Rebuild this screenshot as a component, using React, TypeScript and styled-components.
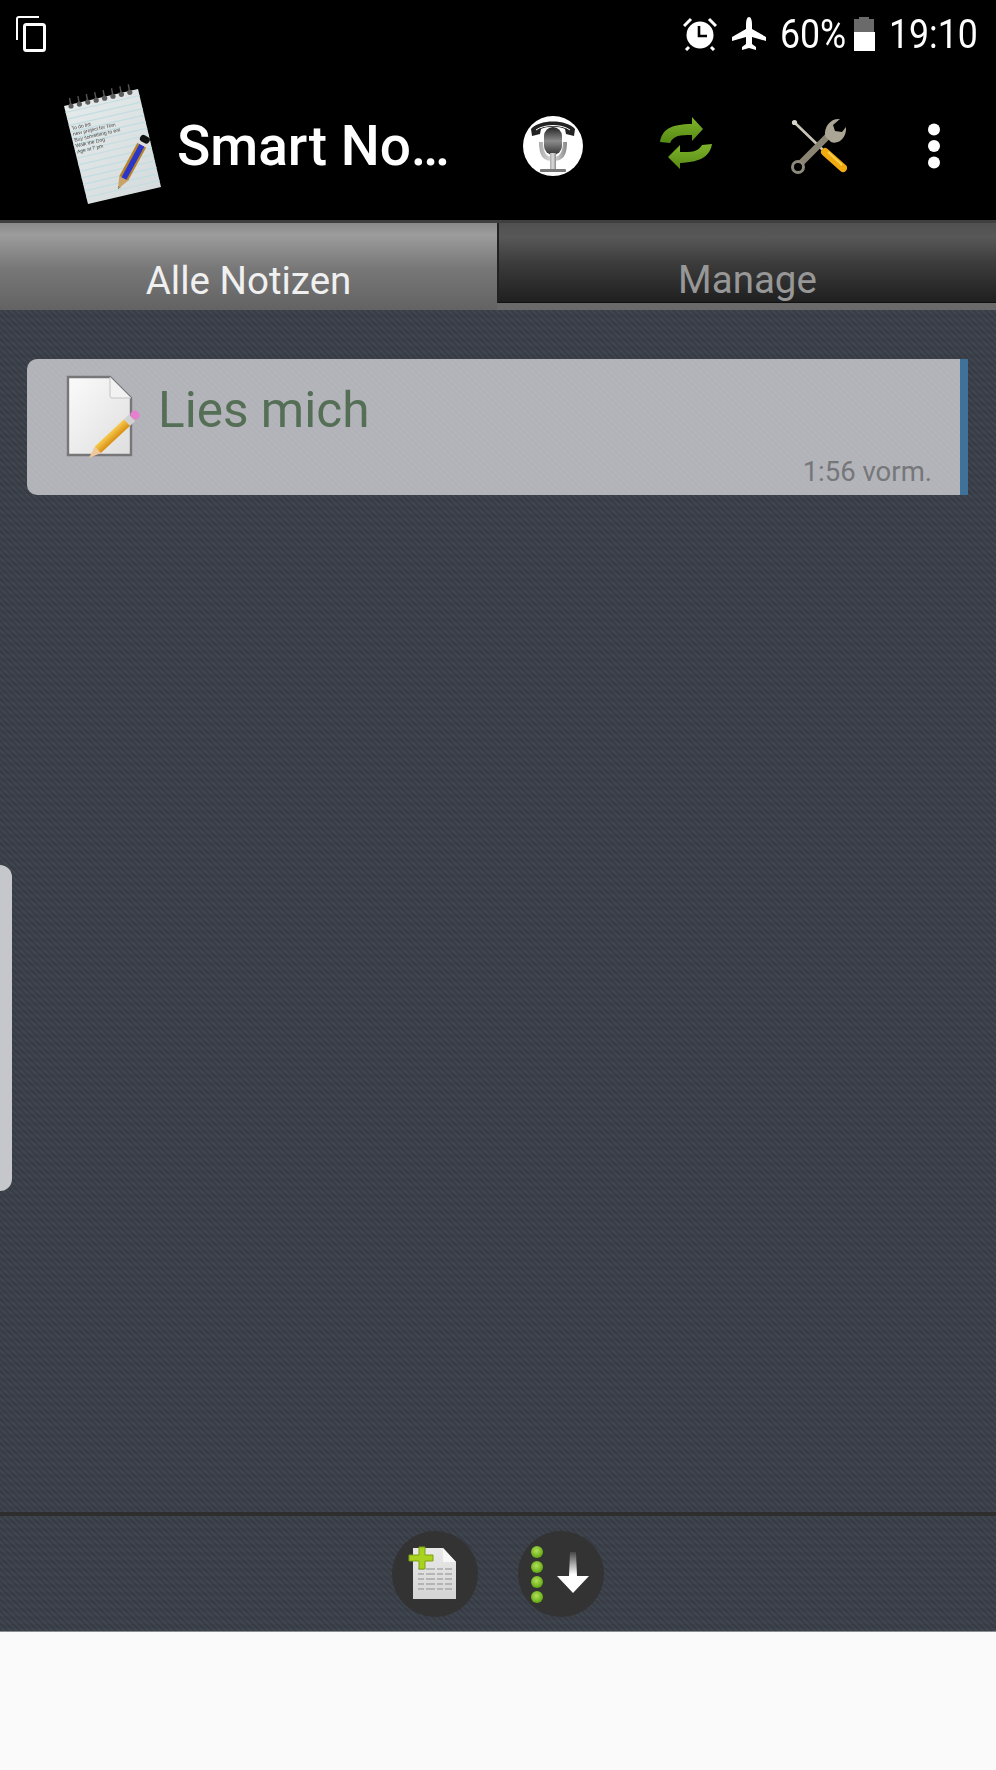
import React from "react";
import styled, { createGlobalStyle, css } from "styled-components";

const Global = createGlobalStyle`
  html, body { margin: 0; padding: 0; background: #fafafa; }
  * { box-sizing: border-box; }
`;

const weave = css`
  background-color: #40464f;
  background-image:
    linear-gradient(45deg, rgba(0,0,0,.11) 25%, transparent 25%, transparent 50%, rgba(0,0,0,.11) 50%, rgba(0,0,0,.11) 75%, transparent 75%),
    linear-gradient(0deg, rgba(0,0,10,.05) 50%, transparent 50%);
  background-size: 6px 6px, 8px 8px;
`;

const Page = styled.div`
  width: 996px;
  height: 1770px;
  background: #fafafa;
  display: flex;
  flex-direction: column;
  font-family: Roboto, "Liberation Sans", sans-serif;
  overflow: hidden;
`;

const StatusBar = styled.div`
  height: 72px;
  background: #000;
  display: flex;
  align-items: center;
  justify-content: space-between;
  padding: 0 20px 4px 15px;
  color: #fff;
`;
const StatusRight = styled.div`
  display: flex;
  align-items: center;
`;
const StatusText = styled.span<{ $w: number; $ml: number; $sx: number }>`
  display: block;
  width: ${(p) => p.$w}px;
  margin-left: ${(p) => p.$ml}px;
  font-size: 41px;
  line-height: 46px;
  white-space: nowrap;
  transform: scaleX(${(p) => p.$sx});
  transform-origin: left center;
`;
const StatusIcon = styled.svg<{ $ml?: number }>`
  display: block;
  margin-left: ${(p) => p.$ml ?? 0}px;
  flex: none;
`;

const ActionBar = styled.div`
  height: 148px;
  background: #000;
  display: flex;
  align-items: center;
  padding-right: 11px;
`;
const Logo = styled.svg`
  display: block;
  flex: none;
  margin-left: 62px;
  filter: blur(0.4px);
`;
const Title = styled.div`
  flex: 1;
  margin-left: 15px;
  color: #fff;
  font-size: 55px;
  font-weight: 500;
  line-height: 64px;
  white-space: nowrap;
`;
const ActionButton = styled.div<{ $w: number }>`
  width: ${(p) => p.$w}px;
  height: 148px;
  display: flex;
  align-items: center;
  justify-content: center;
  flex: none;
  svg { display: block; filter: blur(0.5px); }
`;

const Tabs = styled.div`
  height: 90px;
  display: flex;
  border-top: 3px solid #3f3f3f;
  background: #6a6a6a;
`;
const Tab = styled.div<{ $active?: boolean }>`
  width: ${(p) => (p.$active ? 497 : 499)}px;
  height: ${(p) => (p.$active ? 87 : 80)}px;
  display: flex;
  align-items: flex-end;
  justify-content: center;
  font-size: 38.5px;
  line-height: 44px;
  padding-bottom: ${(p) => (p.$active ? 7 : 0)}px;
  color: ${(p) => (p.$active ? "#f0f0f0" : "#979797")};
  background: ${(p) =>
    p.$active
      ? "linear-gradient(#8a8a8a 0, #9c9c9c 12px, #787878 45px, #636363 100%)"
      : "linear-gradient(#505050 0, #585858 14px, #3c3c3c 40px, #1f1f1f 100%)"};
  ${(p) => !p.$active && "border-left: 2px solid #222; border-bottom: 1px solid #111;"}
`;

const Main = styled.div`
  ${weave}
  position: relative;
  height: 1202px;
  padding: 49px 28px 0 27px;
`;
const Handle = styled.div`
  position: absolute;
  left: 0;
  top: 555px;
  width: 12px;
  height: 326px;
  background: #c6c7ca;
  border-radius: 0 13px 13px 0;
`;
const Card = styled.div`
  height: 136px;
  display: flex;
  border-radius: 10px 0 0 10px;
  overflow: hidden;
  background-color: #b2b3b8;
  background-image: linear-gradient(45deg, rgba(255,255,255,.03) 25%, transparent 25%, transparent 50%, rgba(255,255,255,.03) 50%, rgba(255,255,255,.03) 75%, transparent 75%);
  background-size: 6px 6px;
  border-right: 8px solid #3f7199;
`;
const NoteIcon = styled.svg`
  display: block;
  flex: none;
  margin: 16px 0 0 39px;
  filter: blur(0.5px);
`;
const CardBody = styled.div`
  flex: 1;
  display: flex;
  flex-direction: column;
  padding: 22px 28px 7px 8px;
`;
const NoteTitle = styled.div`
  font-size: 49.5px;
  line-height: 58px;
  color: #556f57;
`;
const NoteTime = styled.div`
  margin-top: auto;
  text-align: right;
  font-size: 27.5px;
  line-height: 32px;
  color: #76777a;
`;

const BottomBar = styled.div`
  ${weave}
  height: 120px;
  border-top: 4px solid #2e2e2e;
  border-bottom: 1px solid #8a8c90;
  display: flex;
  align-items: flex-start;
  justify-content: center;
  gap: 40px;
  padding: 15px 1px 0 0;
`;
const RoundButton = styled.div`
  width: 86px;
  height: 86px;
  border-radius: 50%;
  background: #333333;
  flex: none;
  svg { display: block; filter: blur(0.5px); }
`;

const NotepadIcon = () => (
  <Logo width="100" height="124" viewBox="0 0 100 124">
    <defs>
      <linearGradient id="pad" x1="0" y1="0" x2="1" y2="1">
        <stop offset="0" stopColor="#e6ebec" />
        <stop offset="1" stopColor="#d4dadb" />
      </linearGradient>
    </defs>
    <polygon points="2,22 76,5 99,103 26,120" fill="url(#pad)" />
    {Array.from({ length: 14 }).map((_, i) => {
      const t = (i + 1) / 15;
      return (
        <line
          key={i}
          x1={2 + 24 * t}
          y1={22 + 98 * t}
          x2={76 + 23 * t}
          y2={5 + 98 * t}
          stroke="#c2dde0"
          strokeWidth="1.2"
        />
      );
    })}
    {Array.from({ length: 8 }).map((_, i) => {
      const x = 9 + i * 8.4;
      const y = 22 - i * 1.95;
      return (
        <g key={i}>
          <line x1={x} y1={y} x2={x - 1.5} y2={y - 8} stroke="#555" strokeWidth="1.4" />
          <circle cx={x} cy={y} r="2.6" fill="#5c5c5c" />
        </g>
      );
    })}
    <g transform="rotate(-13 10 46)" fill="#444" fontFamily="Liberation Sans, sans-serif" fontSize="5">
      <text x="10" y="46">To do list</text>
      <text x="10" y="52">new project for Tom</text>
      <text x="10" y="58">Buy something to eat</text>
      <text x="10" y="64">Walk the Dog</text>
      <text x="10" y="70">Age at 7 pm</text>
    </g>
    <g transform="translate(56 105) rotate(28.4)">
      <polygon points="-1.5,-3 0,0 1.5,-3" fill="#111" />
      <polygon points="-5,-12 0,0 5,-12" fill="#c9a36a" />
      <rect x="-5" y="-50" width="10" height="38" fill="#b9832a" />
      <rect x="-2.5" y="-50" width="5.5" height="38" fill="#2a36c8" />
      <rect x="-5" y="-54" width="10" height="4" fill="#ddd" />
      <rect x="-5" y="-60" width="10" height="7" rx="3" fill="#111" />
    </g>
  </Logo>
);

const MicIcon = () => (
  <svg width="62" height="62" viewBox="0 0 62 62">
    <defs>
      <linearGradient id="mh" x1="0" y1="0" x2="0" y2="1">
        <stop offset="0" stopColor="#222" />
        <stop offset=".5" stopColor="#8c8c8c" />
        <stop offset="1" stopColor="#333" />
      </linearGradient>
      <linearGradient id="mb" x1="0" y1="0" x2="1" y2="0">
        <stop offset="0" stopColor="#aaa" />
        <stop offset=".5" stopColor="#ddd" />
        <stop offset="1" stopColor="#888" />
      </linearGradient>
    </defs>
    <circle cx="31" cy="31" r="30" fill="#fff" />
    <path d="M9 14C17 4 45 4 53 14L52 21 44 19 43 14C37 11 25 11 19 14L18 19 10 21Z" fill="#222" />
    <path d="M14 15C22 9 40 9 48 15" stroke="#fff" strokeWidth="1" fill="none" />
    <rect x="22" y="12" width="18" height="28" rx="9" fill="url(#mh)" />
    <path d="M17 27C17 42 22 46 31 46S45 42 45 27L41 27C41 38 37 42 31 42S21 38 21 27Z" fill="url(#mb)" />
    <rect x="28" y="38" width="6" height="16" fill="url(#mb)" />
    <rect x="18" y="54" width="26" height="3" rx="1" fill="#777" />
  </svg>
);

const SyncIcon = () => (
  <svg width="60" height="58" viewBox="0 0 60 58">
    <defs>
      <linearGradient id="sg" x1="0" y1="0" x2="0" y2="1">
        <stop offset="0" stopColor="#7fb32a" />
        <stop offset="1" stopColor="#558a14" />
      </linearGradient>
    </defs>
    <g fill="url(#sg)" strokeLinejoin="round">
      <path d="M5 25C7 13 15 7 37 7L37 0 48 12 37 24 37 18C25 18 19 18 15 26Z" />
      <path d="M57 27C55 38 48 45 25 46L25 52 13 40 25 28 25 35C37 35 43 35 47 28Z" />
    </g>
  </svg>
);

const ToolsIcon = () => (
  <svg width="60" height="60" viewBox="0 0 60 60">
    <line x1="8" y1="7" x2="35" y2="33" stroke="#c9c6b8" strokeWidth="2.6" strokeLinecap="round" />
    <circle cx="7.5" cy="6.5" r="2.6" fill="#d8d6ca" />
    <path d="M14 47L41 20" stroke="#8a8572" strokeWidth="6.5" strokeLinecap="butt" />
    <circle cx="11" cy="51" r="5.5" fill="#000" stroke="#8d8a7c" strokeWidth="3" />
    <path d="M38 20C37 10 44 2 53 3L46 9 48 15 55 16 59 11C60 21 52 29 44 26Z" fill="#aaa594" />
    <line x1="38" y1="36" x2="56" y2="52" stroke="#eeaa10" strokeWidth="8" strokeLinecap="round" />
    <line x1="41" y1="36" x2="55" y2="49" stroke="#fbd24a" strokeWidth="1.8" />
  </svg>
);

const MoreIcon = () => (
  <svg width="14" height="46" viewBox="0 0 14 46">
    <circle cx="7" cy="6.5" r="6" fill="#fff" />
    <circle cx="7" cy="23" r="6" fill="#fff" />
    <circle cx="7" cy="39.5" r="6" fill="#fff" />
  </svg>
);

const NoteEditIcon = () => (
  <NoteIcon width="84" height="92" viewBox="0 0 84 92">
    <defs>
      <linearGradient id="nd" x1="0" y1="0" x2="1" y2="1">
        <stop offset="0" stopColor="#fbfbfb" />
        <stop offset="1" stopColor="#dedede" />
      </linearGradient>
      <linearGradient id="pc" x1="0" y1="0" x2="1" y2="0">
        <stop offset="0" stopColor="#f6cc52" />
        <stop offset="1" stopColor="#d98e10" />
      </linearGradient>
    </defs>
    <path d="M2 2H44L65 23V80H2Z" fill="url(#nd)" stroke="#77777a" strokeWidth="2.4" />
    <path d="M44 2V21Q44 23 46 23H65Z" fill="#f2f2f2" stroke="#c4c4c4" strokeWidth="1" />
    <g transform="translate(23 83) rotate(47)">
      <polygon points="-4.5,-12 0,0 4.5,-12" fill="#f0c89a" />
      <rect x="-4.5" y="-52" width="9" height="40" fill="url(#pc)" />
      <rect x="-4.5" y="-59" width="9" height="7" fill="#d2d2d2" />
      <rect x="-4.5" y="-67" width="9" height="8" rx="3.5" fill="#e77fd0" />
    </g>
  </NoteIcon>
);

const AddNoteIcon = () => (
  <svg width="86" height="86" viewBox="0 0 86 86">
    <defs>
      <linearGradient id="ad" x1="0" y1="0" x2="0" y2="1">
        <stop offset="0" stopColor="#e9e9e9" />
        <stop offset="1" stopColor="#d4d4d4" />
      </linearGradient>
    </defs>
    <path d="M21 17H51L64 31V68H21Z" fill="url(#ad)" />
    <path d="M51 17V31H64Z" fill="#f7f7f7" />
    {[38, 43, 48, 53, 58].map((y) => (
      <line key={y} x1="26" y1={y} x2="60" y2={y} stroke="#a8a8a8" strokeWidth="1.4" strokeDasharray="6 2 9 2" />
    ))}
    <path d="M27 16H33V24H41V30H33V38H27V30H17V24H27Z" fill="#a9d21f" stroke="#7da012" strokeWidth="1" />
  </svg>
);

const ImportIcon = () => (
  <svg width="86" height="86" viewBox="0 0 86 86">
    <defs>
      <radialGradient id="gd" cx=".45" cy=".4" r=".6">
        <stop offset="0" stopColor="#b4e05a" />
        <stop offset="1" stopColor="#5fa80f" />
      </radialGradient>
      <linearGradient id="ar" x1="0" y1="0" x2="0" y2="1">
        <stop offset="0" stopColor="#ffffff" stopOpacity=".1" />
        <stop offset=".55" stopColor="#ffffff" />
        <stop offset="1" stopColor="#ffffff" />
      </linearGradient>
    </defs>
    {[21, 36, 51, 66].map((y) => (
      <circle key={y} cx="19" cy={y} r="6" fill="url(#gd)" />
    ))}
    <path d="M52 21H58L59 45H71L55 62 39 45H51Z" fill="url(#ar)" />
  </svg>
);

export default function App() {
  return (
    <Page>
      <Global />
      <StatusBar>
        <StatusIcon width="32" height="38" viewBox="0 0 32 38" fill="none" stroke="#fff">
          <path d="M24 2H4Q2 2 2 4V25" strokeWidth="2" />
          <rect x="9.5" y="9.5" width="20" height="26" rx="2" strokeWidth="3" />
        </StatusIcon>
        <StatusRight>
          <StatusIcon width="34" height="34" viewBox="0 0 34 34">
            <circle cx="17" cy="18" r="13.5" fill="#fff" />
            <path d="M16 9V19H24" stroke="#000" strokeWidth="2.6" fill="none" />
            <path d="M1 9L8 2M33 9L26 2M6 30L3 33M28 30L31 33" stroke="#fff" strokeWidth="3" />
          </StatusIcon>
          <StatusIcon $ml={14} width="36" height="34" viewBox="0 0 36 34">
            <path
              d="M18 0C20 0 21 3 21 8V12L35 20V24L21 20V27L25 30V33L18 31L11 33V30L15 27V20L1 24V20L15 12V8C15 3 16 0 18 0Z"
              fill="#fff"
            />
          </StatusIcon>
          <StatusText $w={64} $ml={13} $sx={0.87}>60%</StatusText>
          <StatusIcon $ml={9} width="22" height="34" viewBox="0 0 22 34">
            <path d="M6 0H16V2H21V15H1V2H6Z" fill="#6a6a6a" />
            <rect x="1" y="15" width="21" height="19" fill="#fff" />
          </StatusIcon>
          <StatusText $w={87} $ml={14} $sx={0.87}>19:10</StatusText>
        </StatusRight>
      </StatusBar>
      <ActionBar>
        <NotepadIcon />
        <Title>Smart No…</Title>
        <ActionButton $w={132}><MicIcon /></ActionButton>
        <ActionButton $w={132}><SyncIcon /></ActionButton>
        <ActionButton $w={132}><ToolsIcon /></ActionButton>
        <ActionButton $w={102}><MoreIcon /></ActionButton>
      </ActionBar>
      <Tabs>
        <Tab $active>Alle Notizen</Tab>
        <Tab>Manage</Tab>
      </Tabs>
      <Main>
        <Handle />
        <Card>
          <NoteEditIcon />
          <CardBody>
            <NoteTitle>Lies mich</NoteTitle>
            <NoteTime>1:56 vorm.</NoteTime>
          </CardBody>
        </Card>
      </Main>
      <BottomBar>
        <RoundButton><AddNoteIcon /></RoundButton>
        <RoundButton><ImportIcon /></RoundButton>
      </BottomBar>
    </Page>
  );
}
